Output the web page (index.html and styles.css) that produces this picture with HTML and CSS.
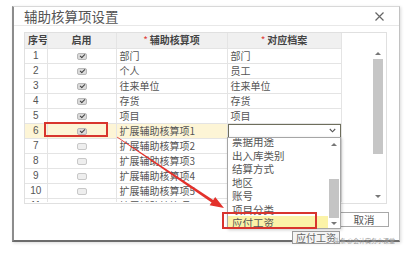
FILE: index.html
```html
<!DOCTYPE html>
<html lang="zh-CN">
<head>
    <meta charset="UTF-8">
    <title>辅助核算项设置</title>
    <link rel="stylesheet" href="styles.css">
</head>
<body>
    <!-- Dialog -->
    <div class="dialog">
        <div class="dialog-head">
            <span class="dialog-title">辅助核算项设置</span>
            <svg class="close" width="9" height="9" viewBox="0 0 9 9">
                <path d="M0.5 0.5 L8.5 8.5 M8.5 0.5 L0.5 8.5" stroke="#666" stroke-width="1.2" fill="none"/>
            </svg>
        </div>

        <div class="dialog-body">
            <div class="grid">
                <div class="grid-table">
                    <table>
                        <colgroup>
                            <col style="width:22px">
                            <col style="width:69px">
                            <col style="width:111px">
                            <col style="width:114px">
                        </colgroup>
                        <thead>
                            <tr>
                                <th>序号</th>
                                <th>启用</th>
                                <th><span class="req">*</span>辅助核算项</th>
                                <th><span class="req">*</span>对应档案</th>
                            </tr>
                        </thead>
                        <tbody>
                            <tr><td class="num">1</td><td class="chk"><span class="box on"></span></td><td>部门</td><td>部门</td></tr>
                            <tr><td class="num">2</td><td class="chk"><span class="box on"></span></td><td>个人</td><td>员工</td></tr>
                            <tr><td class="num">3</td><td class="chk"><span class="box on"></span></td><td>往来单位</td><td>往来单位</td></tr>
                            <tr><td class="num">4</td><td class="chk"><span class="box on"></span></td><td>存货</td><td>存货</td></tr>
                            <tr><td class="num">5</td><td class="chk"><span class="box on"></span></td><td>项目</td><td>项目</td></tr>
                            <tr class="current">
                                <td class="num">6</td>
                                <td class="chk"><span class="box on"></span></td>
                                <td>扩展辅助核算项1</td>
                                <td class="picker">
                                    <div class="select">
                                        <svg width="7" height="5" viewBox="0 0 7 5"><path d="M0.8 1 L3.5 3.8 L6.2 1" stroke="#555" stroke-width="1.1" fill="none"/></svg>
                                    </div>
                                </td>
                            </tr>
                            <tr><td class="num">7</td><td class="chk"><span class="box"></span></td><td>扩展辅助核算项2</td><td></td></tr>
                            <tr><td class="num">8</td><td class="chk"><span class="box"></span></td><td>扩展辅助核算项3</td><td></td></tr>
                            <tr><td class="num">9</td><td class="chk"><span class="box"></span></td><td>扩展辅助核算项4</td><td></td></tr>
                            <tr><td class="num">10</td><td class="chk"><span class="box"></span></td><td>扩展辅助核算项5</td><td></td></tr>
                            <tr><td class="num">11</td><td class="chk"><span class="box"></span></td><td>扩展辅助核算项6</td><td></td></tr>
                        </tbody>
                    </table>
                </div>
                <div class="grid-side">
                    <div class="vscroll">
                        <span class="arrow-up"></span>
                        <span class="thumb"></span>
                        <span class="fill"></span>
                        <span class="arrow-down"></span>
                    </div>
                </div>
            </div>

            <div class="dialog-foot">
                <button class="btn">确定</button>
                <button class="btn">取消</button>
            </div>
        </div>

        <!-- open dropdown of 对应档案 -->
        <div class="dropdown">
            <div class="options">
                <div class="options-inner">
                    <div class="option">票据用途</div>
                    <div class="option">出入库类别</div>
                    <div class="option">结算方式</div>
                    <div class="option">地区</div>
                    <div class="option">账号</div>
                    <div class="option">项目分类</div>
                    <div class="option active">应付工资</div>
                </div>
            </div>
            <div class="dd-scroll">
                <span class="dd-up"><span class="arrow-up"></span></span>
                <span class="dd-gap"></span>
                <span class="dd-thumb"></span>
                <span class="dd-down"><span class="arrow-down"></span></span>
            </div>
        </div>

        <div class="tip">应付工资</div>

        <!-- red annotation boxes -->
        <div class="mark mark-check"></div>
        <div class="mark mark-pick"></div>
    </div>

    <!-- red annotation arrow -->
    <svg class="pointer" width="412" height="254" viewBox="0 0 412 254">
        <polygon points="117.2,136.7 213.2,200.0 215.2,197.1 224,208 209.6,205.3 211.6,202.4 116.8,137.3" fill="#e3312b"/>
    </svg>

    <div class="watermark">头条 @会计实务小课堂</div>
</body>
</html>
```

FILE: styles.css
```css
/* General */
body {
    margin: 0;
    width: 412px;
    height: 254px;
    position: relative;
    overflow: hidden;
    background-color: #fff;
    font-family: "Noto Sans CJK SC", "Liberation Sans", sans-serif;
    color: #555;
}

/* Dialog frame */
.dialog {
    position: relative;
    margin: 6px 0 0 12px;
    width: 388px;
    height: 236px;
    box-sizing: border-box;
    background-color: #fff;
    border-top: 1px solid #d8d8d8;
    border-left: 2px solid #8c8c8c;
    border-right: 1px solid #c2c2c2;
    border-bottom: 2px solid #6c6c6c;
    box-shadow: 1px 1px 3px rgba(0, 0, 0, 0.15);
}

.dialog-head {
    height: 19px;
    box-sizing: border-box;
    border-bottom: 1px solid #e8e8e8;
    display: flex;
    align-items: center;
    justify-content: space-between;
    padding: 0 15px 0 10px;
}

.dialog-title {
    font-size: 13.5px;
    line-height: 18px;
    color: #555;
}

.dialog-body {
    padding: 6px 0 0 10px;
}

/* Grid */
.grid {
    display: flex;
    width: 363px;
    height: 172px;
    box-sizing: border-box;
    border: 1px solid #e0e0e0;
}

.grid-table {
    width: 317px;
    height: 169px;
    overflow: hidden;
}

table {
    width: 316px;
    table-layout: fixed;
    border-collapse: collapse;
    font-size: 10px;
}

th, td {
    height: 15px;
    padding: 0 3px;
    line-height: 14px;
    border: 1px solid #e4e4e4;
    white-space: nowrap;
    overflow: hidden;
    box-sizing: border-box;
}

td {
    color: #555;
}

th {
    background-color: #f0f0f0;
    font-weight: bold;
    color: #444;
    text-align: center;
    border-top: none;
}

th:first-child, td:first-child {
    border-left: none;
}

.req {
    color: #e0403a;
    font-weight: normal;
    margin-right: 2px;
}

td.num {
    text-align: center;
    font-family: "Liberation Sans", sans-serif;
    color: #555;
}

td.chk {
    text-align: center;
}

tr.current td {
    background-color: #fdf5d6;
}

tr.current td.picker {
    background-color: #fff;
    padding: 0;
}

.select {
    height: 14px;
    box-sizing: border-box;
    border: 1px solid #6e6e5c;
    display: flex;
    align-items: center;
    justify-content: flex-end;
    padding-right: 4px;
}

/* checkboxes */
.box {
    display: inline-block;
    vertical-align: middle;
    width: 10px;
    height: 7px;
    box-sizing: border-box;
    border: 1px solid #c8c8c8;
    border-radius: 2px;
    background-color: #eeeeee;
    position: relative;
}

.box.on {
    background-color: #dadada;
    border-color: #b8b8b8;
}

.box.on::after {
    content: "";
    position: absolute;
    left: 2px;
    top: 0;
    width: 4px;
    height: 2px;
    border-left: 1.2px solid #444;
    border-bottom: 1.2px solid #444;
    transform: rotate(-45deg);
}

/* grid scrollbar */
.grid-side {
    flex: 1;
    display: flex;
    justify-content: flex-end;
    padding-top: 15px;
}

.vscroll {
    width: 16px;
    display: flex;
    flex-direction: column;
    align-items: center;
}

.vscroll .arrow-up {
    margin-top: 4px;
    margin-bottom: 4px;
}

.thumb {
    width: 10px;
    height: 95px;
    background-color: #c6c6c6;
}

.fill {
    flex: 1;
}

.vscroll .arrow-down {
    margin-bottom: 5px;
}

.arrow-up {
    width: 0;
    height: 0;
    border-left: 3px solid transparent;
    border-right: 3px solid transparent;
    border-bottom: 3px solid #777;
}

.arrow-down {
    width: 0;
    height: 0;
    border-left: 3px solid transparent;
    border-right: 3px solid transparent;
    border-top: 3px solid #777;
}

/* Footer buttons */
.dialog-foot {
    display: flex;
    justify-content: flex-end;
    gap: 5px;
    padding: 8px 10px 0 0;
}

.btn {
    width: 50px;
    height: 15px;
    padding: 0;
    box-sizing: border-box;
    border: 1px solid #a8a8a8;
    background-color: #fff;
    font-family: "Noto Sans CJK SC", sans-serif;
    font-size: 10.5px;
    line-height: 13px;
    color: #555;
}

/* Dropdown list */
.dropdown {
    position: absolute;
    left: 213px;
    top: 130px;
    width: 114px;
    height: 92px;
    box-sizing: border-box;
    border: 1px solid #a6a6a6;
    background-color: #fff;
    box-shadow: 1px 1px 3px rgba(0, 0, 0, 0.2);
    display: flex;
}

.options {
    flex: 1;
    overflow: hidden;
}

.options-inner {
    margin-top: -3px;
}

.option {
    height: 13.5px;
    line-height: 13.5px;
    padding-left: 4px;
    font-size: 10.5px;
    color: #555;
    white-space: nowrap;
}

.option.active {
    background-color: #fbf3a8;
}

.dd-scroll {
    width: 11px;
    display: flex;
    flex-direction: column;
    align-items: center;
    margin-right: 1px;
}

.dd-up, .dd-down {
    display: flex;
    align-items: center;
    justify-content: center;
    width: 11px;
}

.dd-up {
    height: 12px;
}

.dd-gap {
    height: 29px;
}

.dd-thumb {
    width: 10px;
    height: 39px;
    background-color: #c4c4c4;
}

.dd-down {
    height: 10px;
}

/* tooltip */
.tip {
    position: absolute;
    left: 278px;
    top: 224px;
    height: 11px;
    padding: 0 3px;
    border: 1px solid #9a9a9a;
    background-color: #f4f4f4;
    font-size: 10px;
    line-height: 11px;
    color: #666;
    white-space: nowrap;
}

/* Red annotations */
.mark {
    position: absolute;
    box-sizing: border-box;
    border: 2px solid #d8352e;
}

.mark-check {
    left: 30px;
    top: 115px;
    width: 64px;
    height: 15px;
}

.mark-pick {
    left: 208px;
    top: 205px;
    width: 95px;
    height: 17px;
}

.pointer {
    position: absolute;
    left: 0;
    top: 0;
    pointer-events: none;
}

.watermark {
    position: absolute;
    left: 334px;
    top: 236px;
    font-size: 6px;
    color: #9a9a9a;
    white-space: nowrap;
}
```
